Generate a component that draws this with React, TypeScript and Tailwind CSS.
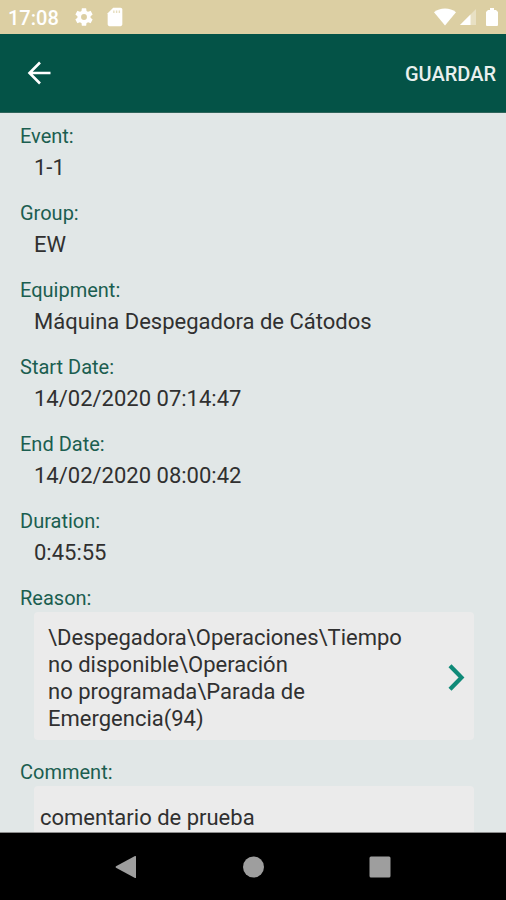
import React, { useState } from 'react';

interface Detail {
  label: string;
  value: string;
}

const details: Detail[] = [
  { label: 'Event:', value: '1-1' },
  { label: 'Group:', value: 'EW' },
  { label: 'Equipment:', value: 'Máquina Despegadora de Cátodos' },
  { label: 'Start Date:', value: '14/02/2020 07:14:47' },
  { label: 'End Date:', value: '14/02/2020 08:00:42' },
  { label: 'Duration:', value: '0:45:55' },
];

const reason = '\\Despegadora\\Operaciones\\Tiempo\nno disponible\\Operación\nno programada\\Parada de\nEmergencia(94)';

const StatusBar: React.FC = () => (
  <div className="flex h-[34px] shrink-0 items-center bg-[#dccfa3] pl-2 pr-1 text-white">
    <span className="pt-[2px] text-[20px] font-medium leading-6">17:08</span>
    <svg className="ml-[14px] h-[22px] w-[22px]" viewBox="0 0 24 24" fill="currentColor" aria-hidden="true">
      <path d="M19.14 12.94c.04-.3.06-.61.06-.94s-.02-.64-.07-.94l2.03-1.58a.49.49 0 0 0 .12-.61l-1.92-3.32a.49.49 0 0 0-.59-.22l-2.39.96a7 7 0 0 0-1.62-.94l-.36-2.54a.48.48 0 0 0-.48-.41h-3.84a.48.48 0 0 0-.47.41l-.36 2.54c-.59.24-1.13.57-1.62.94l-2.39-.96a.48.48 0 0 0-.59.22L2.74 8.87a.48.48 0 0 0 .12.61l2.03 1.58c-.05.3-.09.63-.09.94s.02.64.07.94l-2.03 1.58a.49.49 0 0 0-.12.61l1.92 3.32c.12.22.37.29.59.22l2.39-.96c.5.38 1.03.7 1.62.94l.36 2.54c.05.24.24.41.48.41h3.84c.24 0 .44-.17.47-.41l.36-2.54a7 7 0 0 0 1.62-.94l2.39.96c.22.08.47 0 .59-.22l1.92-3.32a.48.48 0 0 0-.12-.61zM12 15.2a3.2 3.2 0 1 1 0-6.4 3.2 3.2 0 0 1 0 6.4z" />
    </svg>
    <svg className="ml-[9px] h-[22px] w-[22px]" viewBox="0 0 24 24" aria-hidden="true">
      <path fill="currentColor" d="M18 2h-8L4 8v12c0 1.1.9 2 2 2h12c1.1 0 2-.9 2-2V4c0-1.1-.9-2-2-2z" />
      <path fill="#dccfa3" opacity=".7" d="M10 5h1.500v2.500H10zM13 5h1.500v2.500H13zM16 5h1.500v2.500H16z" />
    </svg>
    <span className="flex-1" />
    <svg className="h-[18px] w-[22px]" viewBox="0 0 22 18" fill="currentColor" aria-hidden="true">
      <path d="M11 17.500 0 4.200C3 1.800 6.800.5 11 .5s8 1.300 11 3.700z" />
    </svg>
    <svg className="ml-1 h-[18px] w-4" viewBox="0 0 16 18" fill="currentColor" aria-hidden="true">
      <path opacity=".35" d="M0 17 16 1v16z" />
      <path d="M0 17 10.500 6.500V17z" />
    </svg>
    <svg className="ml-[10px] mr-1 h-[18px] w-3" viewBox="0 0 12 18" fill="currentColor" aria-hidden="true">
      <path d="M4 0h4v2h2l2 2v13q0 1-1 1H1q-1 0-1-1V4l2-2h2z" />
    </svg>
  </div>
);

const NavigationBar: React.FC = () => (
  <nav className="flex h-[68px] shrink-0 items-center justify-center gap-[103px] border-t border-[#8c8c8c] bg-black text-[#9e9e9e]">
    <button type="button" aria-label="Back">
      <svg className="h-6 w-6" viewBox="0 0 24 24" fill="currentColor">
        <path d="M22 1.600v20.800q0 1-1 .5L2 12.700q-1-.7 0-1.400L21 1.100q1-.5 1 .5z" />
      </svg>
    </button>
    <button type="button" aria-label="Home">
      <svg className="h-6 w-6" viewBox="0 0 24 24" fill="currentColor">
        <circle cx="12.500" cy="12" r="10.500" />
      </svg>
    </button>
    <button type="button" aria-label="Recent apps">
      <svg className="h-6 w-6" viewBox="0 0 24 24" fill="currentColor">
        <rect x="1.500" y="1.500" width="21" height="21" rx="1.500" />
      </svg>
    </button>
  </nav>
);

const App: React.FC = () => {
  const [comment, setComment] = useState('comentario de prueba');

  return (
    <div className="flex h-screen flex-col bg-[#e1e7e7] font-[Roboto,sans-serif] text-[#303030]">
      <StatusBar />
      <header className="flex h-[79px] shrink-0 items-center justify-between border-b border-[#2f655b] bg-[#045347] pl-6 pr-[10px] text-white">
        <button type="button" aria-label="Go back">
          <svg className="h-[30px] w-[30px]" viewBox="0 0 30 30" fill="none" stroke="currentColor" strokeWidth="2.600">
            <path d="M26.500 15H5.500M16 4.500 5.500 15 16 25.500" />
          </svg>
        </button>
        <button type="button" className="pt-[2px] text-[20px] font-medium leading-6 text-[#e9f0ee]">GUARDAR</button>
      </header>

      <main className="min-h-0 flex-1 overflow-y-auto pt-[11px] pl-5 pr-8 [scrollbar-width:none]">
        <dl>
          {details.map((detail) => (
            <div key={detail.label} className="mb-[13px]">
              <dt className="text-[20px] leading-6 text-[#1b5e50]">{detail.label}</dt>
              <dd className="pl-[14px] text-[22px] leading-[40px]">{detail.value}</dd>
            </div>
          ))}
        </dl>

        <div className="mb-5">
          <label htmlFor="reason" className="block text-[20px] leading-6 text-[#1b5e50]">Reason:</label>
          <div className="mt-[2px] pl-[14px]">
            <button
              id="reason"
              type="button"
              className="flex w-full items-center justify-between rounded-sm bg-[#ebebeb] pt-3 pb-2 pl-[14px] pr-2 text-left"
            >
              <span className="whitespace-pre-line text-[22px] leading-[27px]">{reason}</span>
              <svg className="h-7 w-[18px] shrink-0" viewBox="0 0 18 28" fill="none" stroke="#0f8a78" strokeWidth="4.200">
                <path d="M2 1.700 13.500 13.500 2 25.300" />
              </svg>
            </button>
          </div>
        </div>

        <div className="pb-5">
          <label htmlFor="comment" className="block text-[20px] leading-6 text-[#1b5e50]">Comment:</label>
          <div className="mt-[2px] pl-[14px]">
            <textarea
              id="comment"
              rows={3}
              value={comment}
              onChange={(e) => setComment(e.target.value)}
              className="block w-full resize-none rounded-sm bg-[#ebebeb] px-[6px] py-[18px] text-[22px] leading-[27px] outline-none"
            />
          </div>
        </div>
      </main>

      <NavigationBar />
    </div>
  );
};

export default App;
